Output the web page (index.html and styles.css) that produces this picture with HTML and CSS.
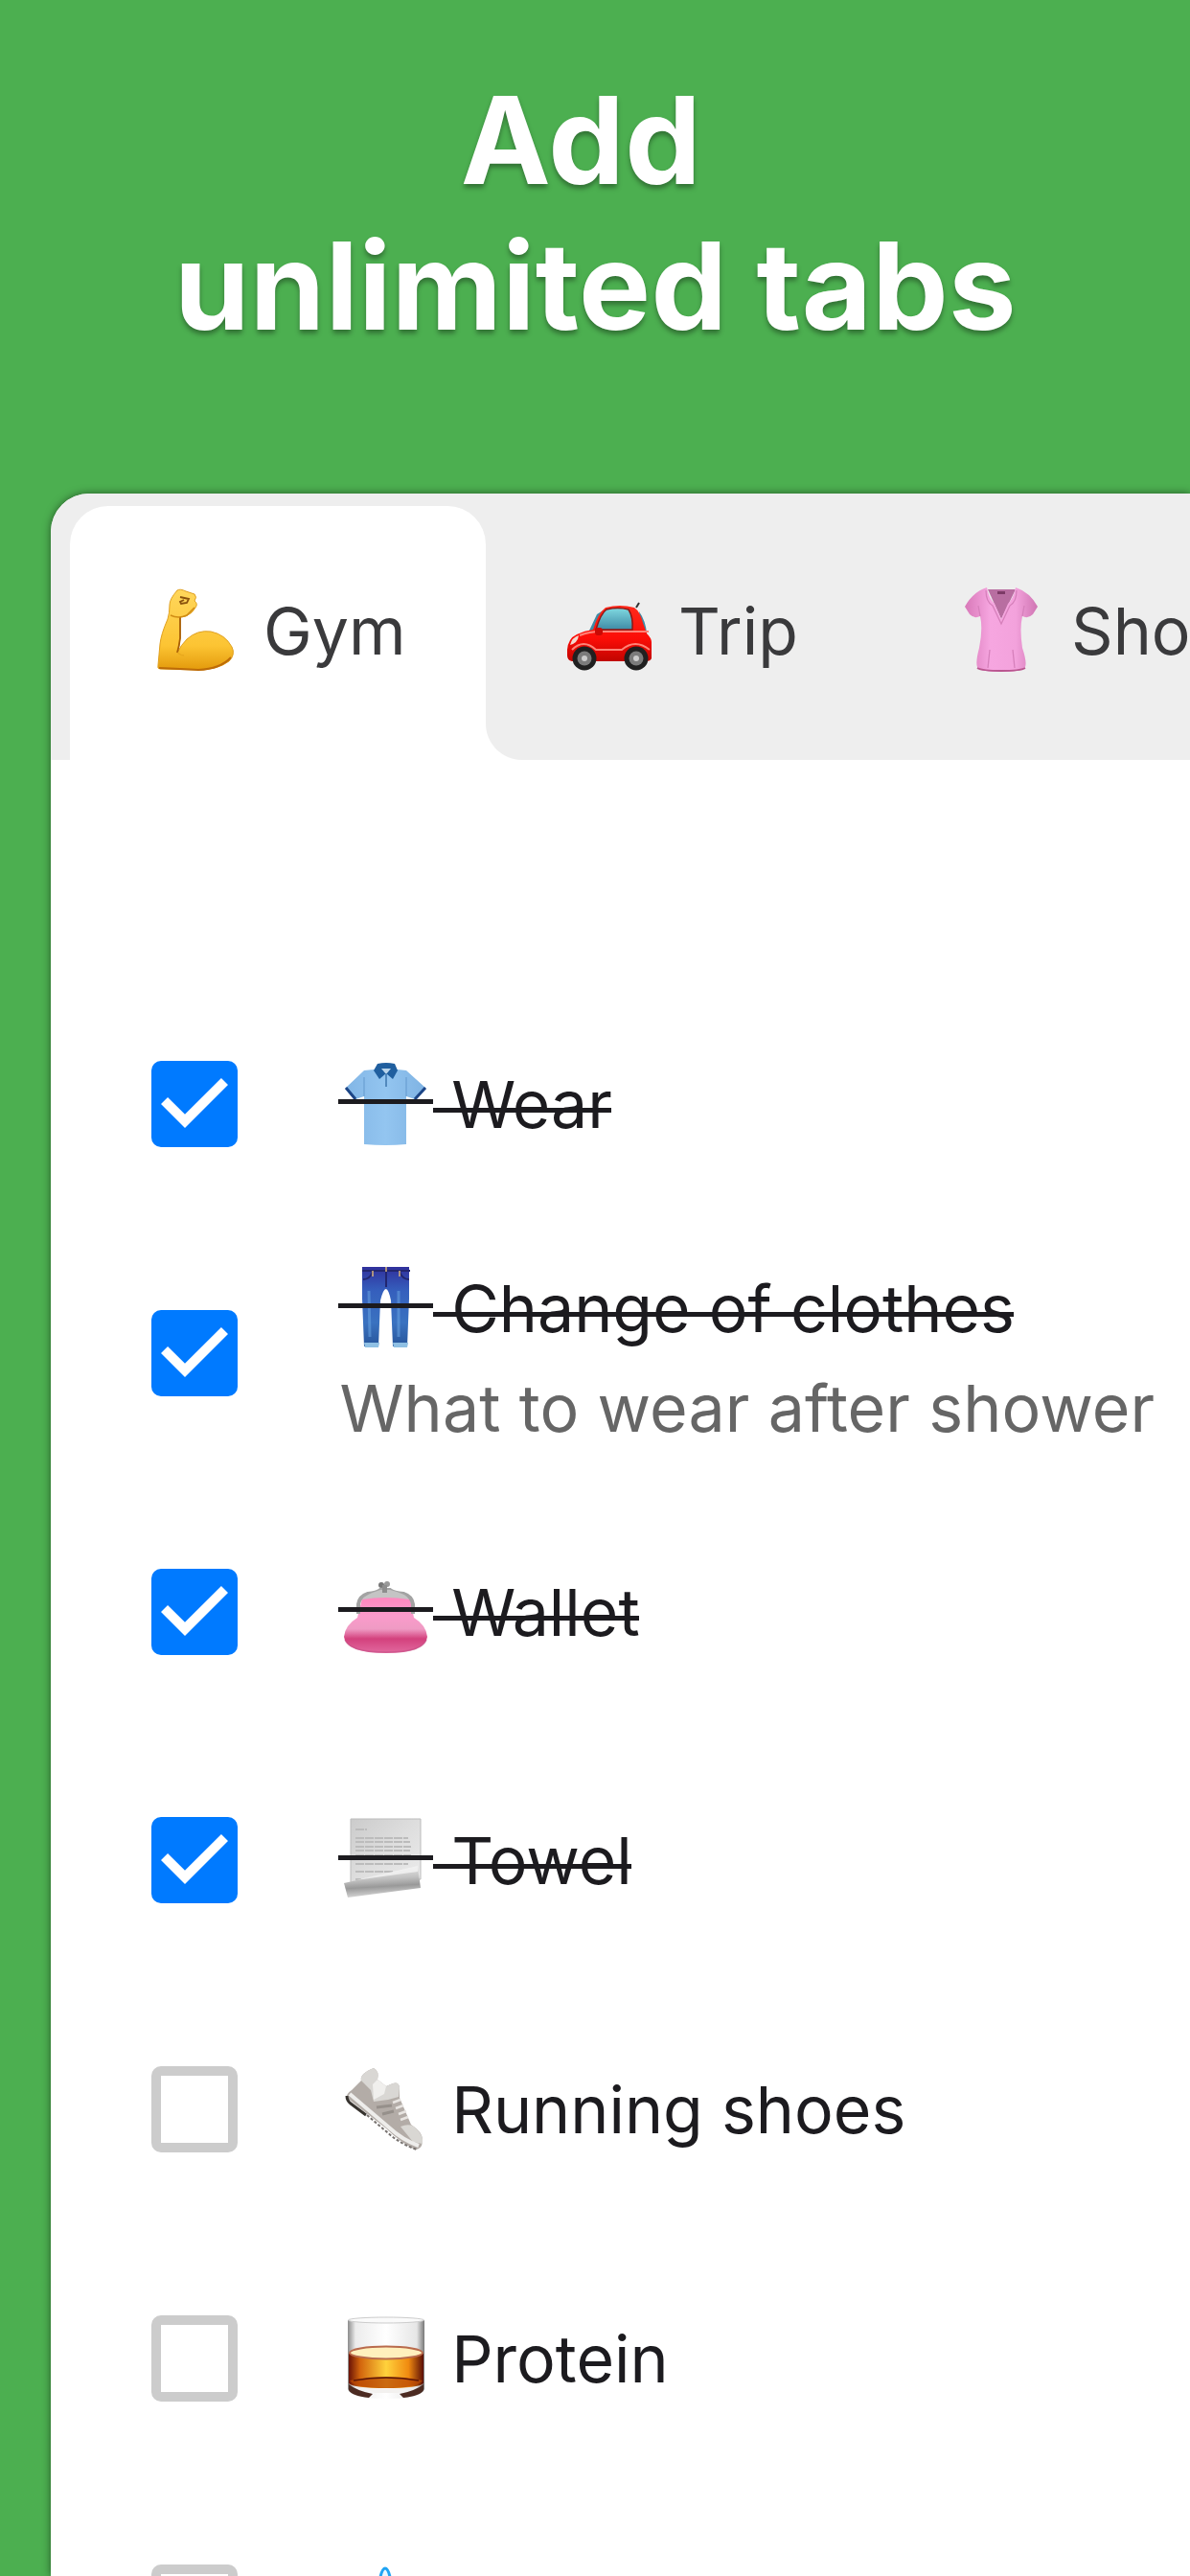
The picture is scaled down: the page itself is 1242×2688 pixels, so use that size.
FILE: index.html
```
<!DOCTYPE html>
<html lang="en">
<head>
    <meta charset="UTF-8">
    <meta name="viewport" content="width=device-width, initial-scale=1.0">
    <title>Add unlimited tabs</title>
    <link rel="stylesheet" href="styles.css">
</head>
<body>
    <!-- shared gradients and checkbox icons -->
    <svg class="defs" width="0" height="0" aria-hidden="true">
        <defs>
            <linearGradient id="skin" x1="0" y1="0" x2="0" y2="1">
                <stop offset="0" stop-color="#ffd75c"/>
                <stop offset=".7" stop-color="#fcc433"/>
                <stop offset="1" stop-color="#e39a0c"/>
            </linearGradient>
            <linearGradient id="glass" x1="0" y1="0" x2="0" y2="1">
                <stop offset="0" stop-color="#7fd8e0"/>
                <stop offset="1" stop-color="#3f8ba6"/>
            </linearGradient>
            <linearGradient id="paint" x1="0" y1="0" x2="0" y2="1">
                <stop offset="0" stop-color="#ff2a1c"/>
                <stop offset=".6" stop-color="#fb0d07"/>
                <stop offset="1" stop-color="#c00400"/>
            </linearGradient>
            <linearGradient id="blouse" x1="0" y1="0" x2="1" y2="0">
                <stop offset="0" stop-color="#d878b8"/>
                <stop offset=".35" stop-color="#f6a6e0"/>
                <stop offset=".7" stop-color="#f3a2dc"/>
                <stop offset="1" stop-color="#cf74b2"/>
            </linearGradient>
            <linearGradient id="shirt" x1="0" y1="0" x2="1" y2="0">
                <stop offset="0" stop-color="#82b6e6"/>
                <stop offset=".5" stop-color="#93c5f0"/>
                <stop offset="1" stop-color="#7fb3e3"/>
            </linearGradient>
            <linearGradient id="denim" x1="0" y1="0" x2="0" y2="1">
                <stop offset="0" stop-color="#30309c"/>
                <stop offset=".3" stop-color="#355fbd"/>
                <stop offset=".7" stop-color="#3a72c0"/>
                <stop offset="1" stop-color="#27559b"/>
            </linearGradient>
            <linearGradient id="purse" x1="0" y1="0" x2="0" y2="1">
                <stop offset="0" stop-color="#fd86bd"/>
                <stop offset=".35" stop-color="#fa9bcb"/>
                <stop offset=".58" stop-color="#ef9bc4"/>
                <stop offset=".75" stop-color="#d3417d"/>
                <stop offset="1" stop-color="#e2699f"/>
            </linearGradient>
            <linearGradient id="paper" x1="0" y1="0" x2="1" y2="1">
                <stop offset="0" stop-color="#cbcbcb"/>
                <stop offset=".5" stop-color="#dedede"/>
                <stop offset="1" stop-color="#ececec"/>
            </linearGradient>
            <linearGradient id="curl" x1="0" y1="0" x2=".15" y2="1">
                <stop offset="0" stop-color="#f0f0f0"/>
                <stop offset=".45" stop-color="#c2c2c2"/>
                <stop offset=".7" stop-color="#999"/>
                <stop offset="1" stop-color="#d5d5d5"/>
            </linearGradient>
            <linearGradient id="whisky" x1="0" y1="0" x2="1" y2="0">
                <stop offset="0" stop-color="#6a1206"/>
                <stop offset=".15" stop-color="#d2640c"/>
                <stop offset=".5" stop-color="#ffd23c"/>
                <stop offset=".8" stop-color="#f08a10"/>
                <stop offset="1" stop-color="#5a0d06"/>
            </linearGradient>
            <linearGradient id="tumbler" x1="0" y1="0" x2="1" y2="0">
                <stop offset="0" stop-color="#8c8c8c"/>
                <stop offset=".1" stop-color="#ececec"/>
                <stop offset=".5" stop-color="#fff"/>
                <stop offset=".9" stop-color="#e6e6e6"/>
                <stop offset="1" stop-color="#777"/>
            </linearGradient>
        </defs>
        <symbol id="checked" viewBox="3 3 18 18">
            <path fill="#007aff" d="M19 3H5a2 2 0 0 0-2 2v14a2 2 0 0 0 2 2h14a2 2 0 0 0 2-2V5a2 2 0 0 0-2-2z"/>
            <path fill="#fff" d="M10 17l-5-5 1.41-1.41L10 14.17l7.59-7.59L19 8z"/>
        </symbol>
        <symbol id="unchecked" viewBox="3 3 18 18">
            <path fill="#ccc" d="M19 5v14H5V5h14m0-2H5a2 2 0 0 0-2 2v14a2 2 0 0 0 2 2h14a2 2 0 0 0 2-2V5a2 2 0 0 0-2-2z"/>
        </symbol>
    </svg>

    <h1 class="title">Add 
unlimited tabs</h1>

    <div class="card">
        <div class="tabs">
            <div class="tab active">
                <svg class="emoji" viewBox="0 0 100 100">
                    <path fill="url(#skin)" stroke="#e0a01f" stroke-width="1" d="M26 8Q29 6 35 9L44 12Q47 15 44 19Q48 22 45 26Q42 32 35 35L29 36L29 58Q28 67 26 73Q30 65 36 59Q47 49 61 51Q76 54 83 67Q87 75 80 82Q68 91 48 91L8 90Q5 90 6 86L8 64Q9 54 16 38Q18 32 18 23Q18 17 26 8Z"/>
                    <path fill="none" stroke="#a85f08" stroke-width="1.8" d="M29 36V58Q28 66 26 73"/>
                    <path fill="none" stroke="#8a520c" stroke-width="1.8" d="M29 15L38 17L36 21L30 22L29 20L33 18"/>
                    <path fill="none" stroke="#d18d14" stroke-width="1.6" d="M19 34Q27 38 36 34L44 26"/>
                    <path fill="none" stroke="#bd6b08" stroke-width="2" d="M7 89Q30 90 48 91Q71 90 82 78"/>
                    <path fill="none" stroke="#e8a81e" stroke-width="1.4" d="M26 73Q30 76 33 76"/>
                </svg>
                <span class="tab-name">Gym</span>
            </div>
            <div class="tab trip">
                <svg class="emoji" viewBox="0 0 100 100">
                    <path stroke="#333" stroke-width="2" d="M79 26L82 21"/>
                    <path fill="#3f8ba6" d="M38 33L30 50H36L46 28ZM82 30Q89 40 90 53H84Z"/>
                    <path fill="url(#paint)" d="M34 49Q39 32 47 26Q62 22 77 26Q83 30 86 42L90 53Q95 58 95 62V79Q94 82 89 82H12Q7 81 7 76V70Q8 58 17 54Q25 50 34 49Z"/>
                    <path fill="url(#glass)" stroke="#8b1714" stroke-width="1.5" d="M37 49Q42 32 48 28Q60 25 71 28Q76 36 75 49Z"/>
                    <path fill="none" stroke="#ff8377" stroke-width="2" d="M20 55Q30 51 42 51H92M12 70Q24 58 37 70H64Q78 58 93 70"/>
                    <path fill="#f3d9ce" d="M10 65Q12 57 19 55Q18 63 10 65Z"/>
                    <rect x="36" y="47" width="8" height="8" rx="3" fill="#c90a05"/>
                    <circle cx="25" cy="79" r="12.5" fill="#202020"/>
                    <circle cx="79" cy="79" r="12.5" fill="#202020"/>
                    <circle cx="25" cy="79" r="7.5" fill="#7b7b7b"/>
                    <circle cx="79" cy="79" r="7.5" fill="#7b7b7b"/>
                    <circle cx="25" cy="79" r="3" fill="#ccc"/>
                    <circle cx="79" cy="79" r="3" fill="#ccc"/>
                </svg>
                <span class="tab-name">Trip</span>
            </div>
            <div class="tab shop">
                <svg class="emoji" viewBox="0 0 100 100">
                    <path fill="#b86ea1" d="M36 7H65L50 38Z"/>
                    <path fill="url(#blouse)" d="M35 5Q37 16 43 22L50 38L57 22Q63 16 65 5Q80 10 88 25L83 33Q78 38 72 35Q69 48 72 68Q77 83 75 88Q73 93 50 93Q27 93 25 88Q23 83 27 68Q31 48 28 35Q22 38 17 33L12 25Q20 10 35 5Z"/>
                    <path fill="none" stroke="#d680bb" stroke-width="1.3" d="M34 8Q34 20 41 24L50 43L59 24Q66 20 66 8M28 35L26 24M72 35L74 24M38 70L36 89M62 70L64 89"/>
                    <path fill="none" stroke="#b9568f" stroke-width="2" d="M25 89Q30 92 50 92Q70 92 75 89"/>
                    <rect x="46" y="9" width="8" height="3" fill="#7d3b67"/>
                </svg>
                <span class="tab-name">Shopping</span>
            </div>
        </div>

        <div class="list">
            <div class="item done">
                <svg class="box"><use href="#checked"/></svg>
                <div class="text">
                    <div class="line">
                        <span class="icon"><svg class="emoji" viewBox="0 0 100 100">
                            <path fill="url(#shirt)" d="M37 14L27 15L8 33L18 45L27 42V92Q50 94 71 92V42L80 45L91 33L71 15L62 14Z"/>
                            <path fill="none" stroke="#1c4586" stroke-width="3" d="M8 33L18 45M80 45L91 33"/>
                            <path fill="#205f9f" d="M41 8Q50 6 59 8L62 15L57 24L50 18L43 24L37 15Z"/>
                            <path fill="#b9d4ea" d="M45 13H55L50 19Z"/>
                            <path stroke="#3d74ad" stroke-width="1.5" d="M50 18V32"/>
                            <path stroke="#6a9fd2" stroke-width="1.2" d="M27 22V42M71 22V42"/>
                        </svg></span><span class="name"> Wear</span>
                    </div>
                </div>
            </div>
            <div class="item done two-line">
                <svg class="box"><use href="#checked"/></svg>
                <div class="text">
                    <div class="line">
                        <span class="icon"><svg class="emoji" viewBox="0 0 100 100">
                            <path fill="url(#denim)" d="M25 7H74L74 40L72 90H57L55 42Q50 18 44 42L42 90H27L25 40Z"/>
                            <path fill="#8fc0e4" d="M27 86H43L42 91H28ZM57 86H73L72 91H58Z"/>
                            <path fill="none" stroke="#22266f" stroke-width="2" d="M25 11H75M50 8V28M26 20Q33 20 36 12M74 20Q67 20 64 12"/>
                            <path stroke="#d7b47e" stroke-width="1.5" d="M36 11V17M64 11V17M50 7V12"/>
                            <path fill="none" stroke="#6ba7e4" stroke-width="3" opacity=".5" d="M32 32L33 80M63 32L63 80"/>
                        </svg></span><span class="name"> Change of clothes</span>
                    </div>
                    <div class="note">What to wear after shower</div>
                </div>
            </div>
            <div class="item done">
                <svg class="box"><use href="#checked"/></svg>
                <div class="text">
                    <div class="line">
                        <span class="icon"><svg class="emoji" viewBox="0 0 100 100">
                            <path fill="url(#purse)" d="M25 36Q50 30 75 36L79 56Q92 64 93 76Q91 93 50 93Q8 93 6 76Q7 64 20 56Z"/>
                            <path fill="none" stroke="#a3a3a3" stroke-width="4" d="M21 52V42Q22 34 31 31Q40 30 44 27H54Q58 30 68 31Q77 34 78 42V52"/>
                            <path fill="#c4c4c4" d="M25 37Q28 32 44 27H54Q71 31 74 37Q50 33 25 37Z"/>
                            <path fill="none" stroke="#c04c82" stroke-width="1.5" opacity=".5" d="M7 79Q12 92 50 92Q88 92 92 79"/>
                            <circle cx="45" cy="22" r="3" fill="#777"/>
                            <circle cx="51" cy="21" r="3" fill="#999"/>
                            <rect x="46" y="22" width="5" height="8" fill="#8d8d8d"/>
                        </svg></span><span class="name"> Wallet</span>
                    </div>
                </div>
            </div>
            <div class="item done">
                <svg class="box"><use href="#checked"/></svg>
                <div class="text">
                    <div class="line">
                        <span class="icon"><svg class="emoji" viewBox="0 0 100 100">
                            <path fill="url(#paper)" stroke="#bbb" stroke-width="1" d="M13 7H86V70L13 75Z"/>
                            <path fill="none" stroke="#bcbcbc" stroke-width="2" stroke-dasharray="9 1" d="M18 18H30M18 27H73M18 31H75M18 36H76M18 40H75M18 45H76M18 49H74M18 54H73M18 62H58M18 70H24"/>
                            <path fill="url(#curl)" d="M6 74L83 57L86 79L10 89Z"/>
                            <path fill="#f4f4f4" d="M18 71L83 56V62Z" opacity=".8"/>
                        </svg></span><span class="name"> Towel</span>
                    </div>
                </div>
            </div>
            <div class="item">
                <svg class="box"><use href="#unchecked"/></svg>
                <div class="text">
                    <div class="line">
                        <span class="icon"><svg class="emoji" viewBox="0 0 100 100">
                            <path fill="#b3aca7" d="M37 7Q43 10 41 19L50 26L57 23Q63 21 64 27L64 38L76 66Q89 74 88 84Q87 92 80 92Q64 84 50 70L9 38Q8 34 14 30L24 20Q22 13 37 7Z"/>
                            <path fill="#d9d7d4" d="M37 7Q43 10 41 19L50 26L57 23Q63 21 64 27L63 37L52 40L37 42L34 30L24 20Q22 13 37 7Z"/>
                            <path fill="#f0efed" d="M36 24L41 19L50 26L48 34L37 40Z"/>
                            <path fill="#d9d7d3" d="M65 68Q77 63 83 72Q89 78 88 86L78 84Z"/>
                            <path fill="none" stroke="#eeedeb" stroke-width="4" d="M12 34L53 69Q67 82 84 88"/>
                            <path fill="none" stroke="#77726f" stroke-width="2" stroke-dasharray="3 2" d="M30 56L50 73Q64 86 82 92"/>
                            <path fill="none" stroke="#37332f" stroke-width="3" d="M9 36Q9 41 13 44L29 56"/>
                            <path stroke="#e8e5e2" stroke-width="2.5" d="M57 43L65 40M60 49L68 46M63 55L71 52M65 61L73 58"/>
                            <path stroke="#96908b" stroke-width="3" d="M40 48L56 46M46 55L58 52"/>
                        </svg></span><span class="name"> Running shoes</span>
                    </div>
                </div>
            </div>
            <div class="item">
                <svg class="box"><use href="#unchecked"/></svg>
                <div class="text">
                    <div class="line">
                        <span class="icon"><svg class="emoji" viewBox="0 0 100 100">
                            <path fill="url(#tumbler)" d="M10 10H90V82Q87 92 50 92Q13 92 10 82Z"/>
                            <ellipse cx="50" cy="10" rx="39.5" ry="3" fill="#fafafa" stroke="#ccc"/>
                            <path fill="url(#whisky)" d="M11 45H89V76Q84 81 50 81Q16 81 11 76Z"/>
                            <ellipse cx="50" cy="44" rx="38" ry="6.5" fill="#fff0bd" stroke="#b96b4d" stroke-width="2"/>
                            <path fill="#b94804" d="M12 73Q50 65 88 73Q82 81 50 81Q18 81 12 73Z" opacity=".75"/>
                            <path fill="none" stroke="#5c1708" stroke-width="1.5" d="M16 73Q50 67 84 73"/>
                            <path fill="#4c2b22" d="M11 77Q20 84 36 87L32 91Q14 89 11 83ZM89 77Q80 84 64 87L68 91Q86 89 89 83Z"/>
                            <path fill="#f3f1ef" d="M30 82H70L62 86H38Z"/>
                        </svg></span><span class="name"> Protein</span>
                    </div>
                </div>
            </div>
            <div class="item">
                <svg class="box"><use href="#unchecked"/></svg>
                <div class="text">
                    <div class="line">
                        <span class="icon"><svg class="emoji" viewBox="0 0 100 100">
                            <path fill="#e8f8ff" stroke="#20a4f3" stroke-width="3" d="M49 9Q52 9 54 18Q78 50 76 66Q73 92 49 92Q25 92 22 66Q20 50 44 18Q46 9 49 9Z"/>
                        </svg></span>
                    </div>
                </div>
            </div>
        </div>
    </div>
</body>
</html>
```
FILE: styles.css
```
* {
    box-sizing: border-box;
}
body {
    margin: 0;
    height: 2688px;
    overflow: hidden;
    background: #4caf50;
    font-family: Inter, "Liberation Sans", sans-serif;
    color: #1c1b1f;
}
.defs {
    display: block;
}
.title {
    margin: 0;
    padding: 70px 0 0 1px;
    height: 515px;
    color: #fff;
    font-size: 126px;
    font-weight: 700;
    line-height: 152px;
    letter-spacing: 0.4px;
    text-align: center;
    white-space: break-spaces;
    text-shadow: 0 4px 5px rgba(0,0,0,0.35);
}
.card {
    height: 2173px;
    margin-left: 53px;
    background: #fff;
    border-radius: 40px 0 0 0;
    box-shadow: 0 0 8px rgba(0,0,0,0.5);
    overflow: hidden;
}
.tabs {
    display: flex;
    height: 278px;
    padding: 13px 0 0 20px;
    background: #eee;
}
.tab {
    display: flex;
    flex: none;
    height: 265px;
    padding: 0 0 5px 78px;
    align-items: center;
    color: #3a3a3c;
    font-size: 68px;
    white-space: nowrap;
}
.tab.active {
    position: relative;
    width: 434px;
    padding-left: 86px;
    background: #fff;
    border-radius: 40px 40px 0 0;
}
/* inverted corner beside the active tab */
.tab.active::after {
    content: "";
    position: absolute;
    left: 100%;
    bottom: 0;
    width: 38px;
    height: 38px;
    background: radial-gradient(circle at 100% 0, transparent 37.5px, #fff 38.5px);
}
.trip {
    width: 410px;
}
.emoji {
    flex: none;
    display: block;
    width: 100px;
    height: 100px;
}
.tab-name {
    margin-left: 23px;
}
.active .tab-name {
    margin-left: 16px;
}
.list {
    padding-top: 229px;
}
.item {
    display: flex;
    height: 259.75px;
    padding-left: 105px;
    align-items: center;
}
.two-line {
    height: 270px;
}
.box {
    flex: none;
    width: 90px;
    height: 90px;
    margin-right: 104.5px;
}
.two-line .box {
    margin-bottom: 9px;
}
.line {
    display: flex;
    height: 104px;
    align-items: center;
    font-size: 68px;
    line-height: 100px;
}
.icon, .name {
    position: relative;
    flex: none;
    height: 100px;
}
.icon {
    width: 99.5px;
}
.name {
    white-space: pre;
}
/* the emoji and its label are struck at different heights */
.done .icon::after, .done .name::after {
    content: "";
    position: absolute;
    left: 0;
    right: 0;
    top: 45px;
    height: 5px;
    background: #1c1b1f;
}
.done .name::after {
    top: 54px;
    right: 1px;
}
.note {
    padding-left: 2px;
    color: #666;
    font-size: 68px;
    line-height: 104px;
    letter-spacing: 0.1px;
    white-space: nowrap;
}
```
